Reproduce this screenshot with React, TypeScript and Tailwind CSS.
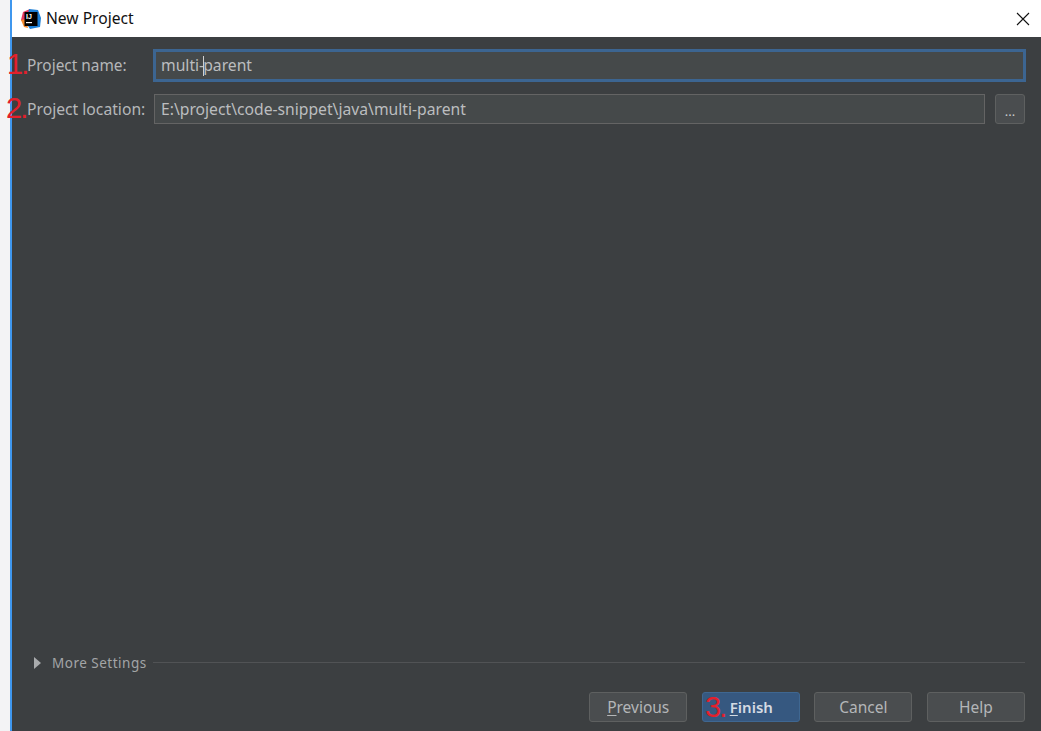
const FONT = "font-['Noto_Sans','Open_Sans',sans-serif]";

const IdeaLogo = () => (
  <svg width="20" height="20" viewBox="0 0 20 20" className="shrink-0">
    <path d="M2 3 L9 0 L11 8 L4 15 L0 11 Z" fill="#e8385f" />
    <path d="M8 0 L17 1 L20 9 L19 18 L9 20 L5 14 Z" fill="#1c7fd6" />
    <path d="M0 11 L5 10 L7 19 L3 18 Z" fill="#f58a2b" />
    <rect x="3.5" y="3" width="13" height="14" fill="#000" />
    <text x="5" y="10" fontSize="7" fontWeight="700" fill="#fff" fontFamily="Liberation Sans, sans-serif">IJ</text>
    <rect x="5" y="13" width="6" height="1.2" fill="#fff" />
  </svg>
);

const Mark = ({ children, className }: { children: string; className: string }) => (
  <span className={`absolute font-['Liberation_Sans',sans-serif] text-[29px] leading-none tracking-[-2px] text-[#e3202c] ${className}`}>
    {children}
  </span>
);

const FooterButton = ({ children, primary }: { children: React.ReactNode; primary?: boolean }) => (
  <button
    className={`flex h-[30px] w-[98px] items-center justify-center rounded-[3px] border ${
      primary
        ? "border-[#3f6791] bg-[#365880] pl-px text-[15px] font-semibold text-[#d4dbe3]"
        : "border-[#5e6060] bg-[#4a4d4f] pt-[2px] text-[15.5px] text-[#b4b6b8]"
    }`}
  >
    {children}
  </button>
);

export default function App() {
  return (
    <div className={`${FONT} flex h-[731px] w-[1041px] overflow-hidden bg-white`}>
      <div className="w-[10px] shrink-0 bg-[#f3f3f5]" />
      <div className="w-[2px] shrink-0 bg-[#3f97ee]" />
      <div className="flex min-w-0 flex-1 flex-col">
        <header className="flex h-[37px] shrink-0 items-center bg-white pl-[9px] pr-[11px]">
          <IdeaLogo />
          <span className="ml-[5px] text-[15.6px] text-[#111]">New Project</span>
          <svg width="14" height="14" viewBox="0 0 14 14" className="ml-auto" stroke="#111" strokeWidth="1.1">
            <path d="M1 1 L13 13 M13 1 L1 13" />
          </svg>
        </header>

        <main className="flex min-h-0 flex-1 flex-col bg-[#3c3f41] pb-[9px] pl-[15px] pr-[16px] pt-[13px] text-[15.7px] text-[#b5b7b9]">
          <div className="flex h-[31px] items-center">
            <label className="w-[126px] shrink-0 text-[15.4px]">Project name:</label>
            <div className="-mr-px flex h-[33px] flex-1 items-center border-[3px] border-[#3c6591] bg-[#45494a] pl-[5px] text-[#bbbdbf]">
              multi-
              <span className="-mx-px h-[20px] w-px bg-[#d0d0d0]" />
              parent
            </div>
          </div>

          <div className="mt-[13px] flex h-[30px] items-center">
            <label className="w-[127px] shrink-0 whitespace-nowrap pt-[2px]">Project location:</label>
            <div className="flex h-[30px] flex-1 items-center border border-[#646464] bg-[#45494a] pl-[6px] pt-[2px] text-[#bbbdbf]">
              E:\project\code-snippet\java\multi-parent
            </div>
            <button className="ml-[10px] flex h-[30px] w-[30px] shrink-0 items-center justify-center rounded-[3px] border border-[#5e6060] bg-[#4a4d4f] pt-[6px] text-[13px] text-[#c8cacc]">
              ...
            </button>
          </div>

          <div className="mt-auto flex items-center">
            <svg width="8" height="12" viewBox="0 0 8 12" className="ml-[7px]" fill="#a9abad">
              <path d="M0 0 L7 6 L0 12 Z" />
            </svg>
            <span className="ml-[10px] text-[13.5px] tracking-[0.5px] text-[#a3a5a7]">More Settings</span>
            <div className="ml-[6px] h-px flex-1 bg-[#515355]" />
          </div>

          <footer className="mt-[19px] flex justify-end gap-[14.6px]">
            <FooterButton>
              <span className="underline underline-offset-2">P</span>revious
            </FooterButton>
            <FooterButton primary>
              <span className="underline underline-offset-2">F</span>inish
            </FooterButton>
            <FooterButton>Cancel</FooterButton>
            <FooterButton>Help</FooterButton>
          </footer>
        </main>
      </div>

      <Mark className="left-[7px] top-[50px]">1.</Mark>
      <Mark className="left-[6px] top-[94px]">2.</Mark>
      <Mark className="left-[705px] top-[693px]">3.</Mark>
    </div>
  );
}
